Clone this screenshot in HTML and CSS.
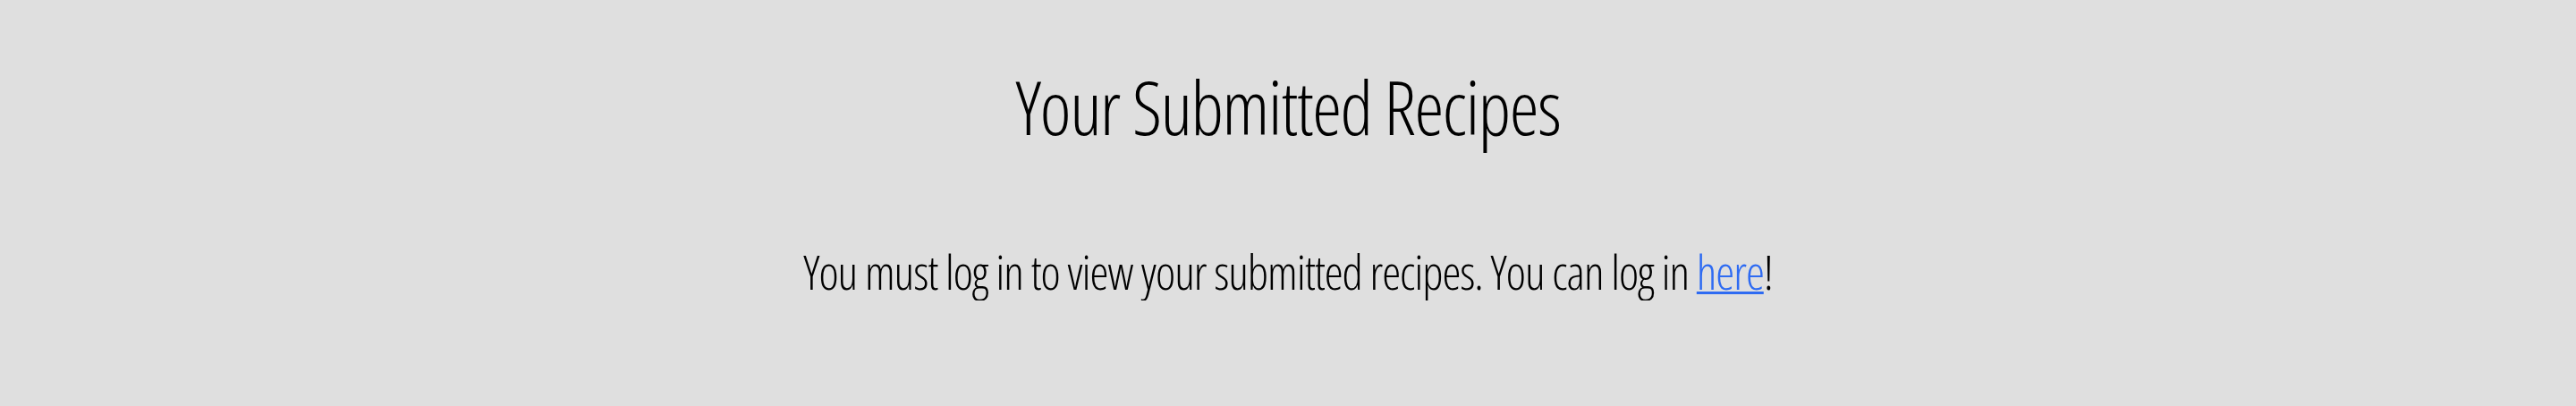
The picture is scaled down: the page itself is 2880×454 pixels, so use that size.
FILE: index.html
```html
<!DOCTYPE html>
<html lang="en">
<head>
<meta charset="utf-8">
<title>Your Submitted Recipes</title>
<link rel="stylesheet" href="styles.css">
</head>
<body>
<main class="page">
  <h1 class="title">Your Submitted Recipes</h1>
  <p class="notice">You must log in to view your submitted recipes. You can log in <a class="notice-link" href="#">here</a>!</p>
</main>
</body>
</html>
```
FILE: styles.css
```css
html, body {
  margin: 0;
  padding: 0;
  background: #dfdfdf;
}
body {
  font-family: "Open Sans", "Liberation Sans", sans-serif;
  font-stretch: 75%;
  font-weight: 300;
  color: #000;
}
.page {
  display: flex;
  flex-direction: column;
  align-items: center;
  padding-top: 69px;
}
.title {
  margin: 0;
  font-size: 83px;
  line-height: 100px;
  font-weight: 300;
  letter-spacing: -1.4px;
  text-align: center;
}
.notice {
  margin: 103px 0 0;
  font-size: 53px;
  line-height: 64px;
  letter-spacing: -1.05px;
  text-align: center;
}
.notice-link {
  color: #2e6bf2;
  text-decoration-thickness: 3px;
}
```
